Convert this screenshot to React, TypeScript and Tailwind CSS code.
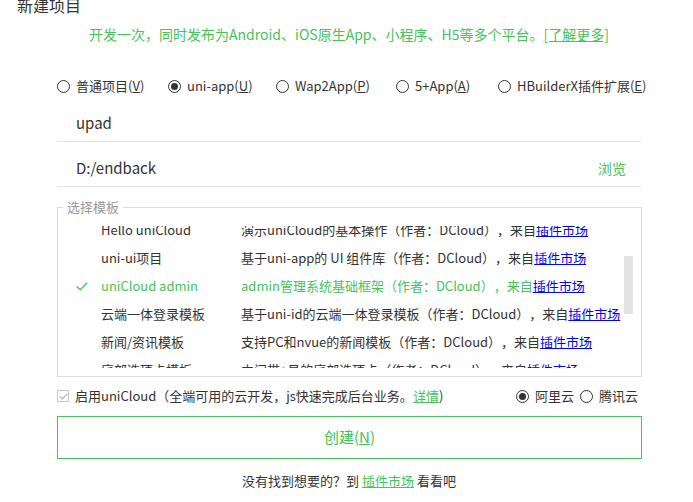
import React from "react";

function Radio({ checked }: { checked?: boolean }) {
  return (
    <span className="w-[13px] h-[13px] rounded-full border border-[#333] flex items-center justify-center shrink-0 bg-white">
      {checked && <span className="w-[7px] h-[7px] rounded-full bg-[#333]" />}
    </span>
  );
}

const rows = [
  { name: "Hello uniCloud", desc: "演示uniCloud的基本操作（作者：DCloud），来自" },
  { name: "uni-ui项目", desc: "基于uni-app的 UI 组件库（作者：DCloud），来自" },
  { name: "uniCloud admin", desc: "admin管理系统基础框架（作者：DCloud），来自", sel: true },
  { name: "云端一体登录模板", desc: "基于uni-id的云端一体登录模板（作者：DCloud），来自" },
  { name: "新闻/资讯模板", desc: "支持PC和nvue的新闻模板（作者：DCloud），来自" },
  { name: "底部选项卡模板", desc: "中间带+号的底部选项卡（作者：DCloud），来自" },
];

export default function App() {
  return (
    <div className="w-[693px] h-[502px] overflow-hidden bg-white flex flex-col text-[#333] [text-spacing-trim:space-all] font-['Noto_Sans_CJK_SC','Noto_Sans',sans-serif]">
      <div className="-mt-[5px] pl-[17px] h-[20px] leading-[20px] text-[16px]">新建项目</div>
      <div className="mt-[9px] ml-[57px] w-[584px] h-[20px] leading-[20px] text-[14px] text-center text-[#46c35a] whitespace-nowrap">
        开发一次，同时发布为Android、iOS原生App、小程序、H5等多个平台。<span className="underline">[了解更多]</span>
      </div>
      <div className="mt-[32px] ml-[57px] flex h-[20px] items-center text-[13px] whitespace-nowrap">
        <div className="w-[111px] flex items-center gap-[6px]"><Radio /><span>普通项目(<span className="underline">V</span>)</span></div>
        <div className="w-[108px] flex items-center gap-[6px]"><Radio checked /><span>uni-app(<span className="underline">U</span>)</span></div>
        <div className="w-[120px] flex items-center gap-[6px]"><Radio /><span>Wap2App(<span className="underline">P</span>)</span></div>
        <div className="w-[102px] flex items-center gap-[6px]"><Radio /><span>5+App(<span className="underline">A</span>)</span></div>
        <div className="flex items-center gap-[6px]"><Radio /><span>HBuilderX插件扩展(<span className="underline">E</span>)</span></div>
      </div>
      <div className="mt-[10px] ml-[57px] w-[584px] h-[36px] border-b border-[#e3e3e3] flex items-center pl-[19px] text-[15px]">upad</div>
      <div className="ml-[57px] w-[584px] h-[45px] border-b border-[#e3e3e3] flex items-center justify-between pl-[19px] pr-[15px] pt-[8px]">
        <span className="text-[15px]">D:/endback</span>
        <span className="text-[14px] text-[#46c35a]">浏览</span>
      </div>
      <fieldset className="mt-[10px] ml-[57px] w-[585px] border border-[#dcdcdc] pb-[8px] relative">
        <legend className="ml-[5px] px-[4px] h-[20px] leading-[20px] text-[13px] text-[#999]">选择模板</legend>
        <div className="mt-[9px] h-[142px] overflow-hidden relative">
          <div className="-mt-[10px] flex flex-col text-[13px]">
            {rows.map((r) => (
              <div key={r.name} className={"h-[28px] flex items-center pl-[18px] whitespace-nowrap " + (r.sel ? "text-[#46c35a]" : "")}>
                <div className="w-[25px] flex items-center">
                  {r.sel && (
                    <svg width="12" height="9" viewBox="0 0 12 9">
                      <polyline points="0.8,4.5 4.2,7.8 11.2,0.8" fill="none" stroke="#46c35a" strokeWidth="1.4" />
                    </svg>
                  )}
                </div>
                <div className="w-[140px]">{r.name}</div>
                <div>
                  {r.desc}
                  <span className="text-[#0000ff] underline">插件市场</span>
                </div>
              </div>
            ))}
          </div>
          <div className="absolute right-[8px] top-[30px] w-[9px] h-[58px] bg-[#e3e3e3]" />
        </div>
      </fieldset>
      <div className="mt-[9px] ml-[57px] w-[584px] h-[20px] flex items-center justify-between text-[13px] whitespace-nowrap">
        <div className="flex items-center gap-[6px]">
          <span className="w-[12px] h-[12px] border border-[#c8c8c8] flex items-center justify-center">
            <svg width="9" height="7" viewBox="0 0 9 7">
              <polyline points="0.6,3.4 3.2,6 8.4,0.8" fill="none" stroke="#b0b0b0" strokeWidth="1.2" />
            </svg>
          </span>
          <span>
            启用uniCloud（全端可用的云开发，js快速完成后台业务。<span className="text-[#46c35a] underline">详情</span>)
          </span>
        </div>
        <div className="flex items-center gap-[6px] pr-[3px]">
          <Radio checked />
          <span>阿里云</span>
          <Radio />
          <span>腾讯云</span>
        </div>
      </div>
      <div className="mt-[10px] ml-[57px] w-[585px] h-[43px] border border-[#46c35a] flex items-center justify-center text-[15px] text-[#46c35a]">
        创建(<span className="underline">N</span>)
      </div>
      <div className="mt-[12px] ml-[57px] w-[584px] h-[20px] leading-[20px] text-center text-[13px] whitespace-nowrap">
        没有找到想要的？到 <span className="text-[#46c35a] underline">插件市场</span> 看看吧
      </div>
    </div>
  );
}
